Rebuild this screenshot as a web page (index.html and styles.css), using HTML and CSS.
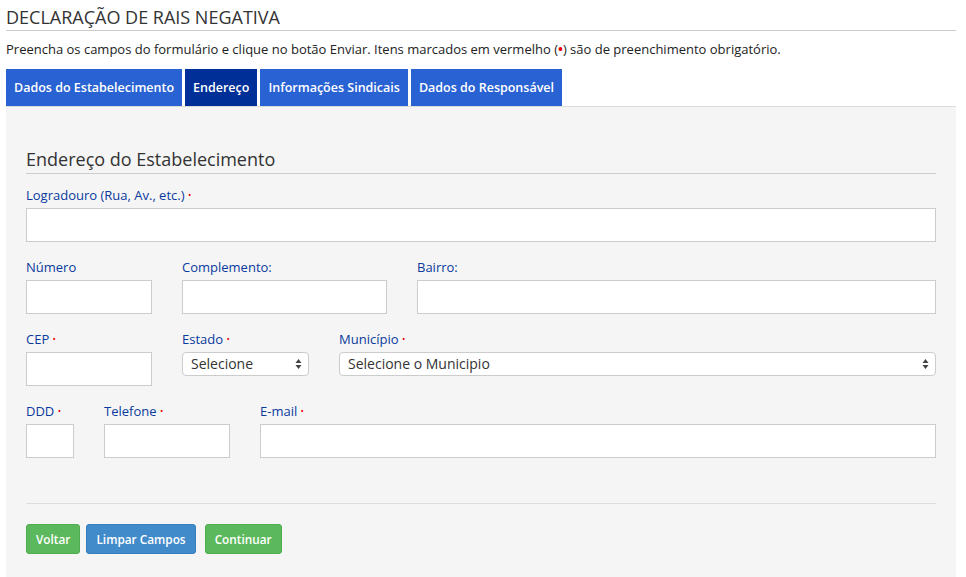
FILE: index.html
```html
<!DOCTYPE html>
<html lang="pt-BR">
<head>
<meta charset="utf-8">
<title>Declaração de RAIS Negativa</title>
<link rel="stylesheet" href="styles.css">
</head>
<body>
<div class="page">
  <h1 class="title">DECLARAÇÃO DE RAIS NEGATIVA</h1>
  <p class="intro">Preencha os campos do formulário e clique no botão Enviar. Itens marcados em vermelho (<span class="req-dot">•</span>) são de preenchimento obrigatório.</p>
  <nav class="tabs">
    <a class="tab">Dados do Estabelecimento</a>
    <a class="tab active">Endereço</a>
    <a class="tab">Informações Sindicais</a>
    <a class="tab">Dados do Responsável</a>
  </nav>
  <div class="panel">
    <h2 class="section-title">Endereço do Estabelecimento</h2>
    <div class="row">
      <div class="field grow">
        <label>Logradouro (Rua, Av., etc.) <span class="req">•</span></label>
        <input type="text" class="input">
      </div>
    </div>
    <div class="row">
      <div class="field w126">
        <label>Número</label>
        <input type="text" class="input">
      </div>
      <div class="field w205">
        <label>Complemento:</label>
        <input type="text" class="input">
      </div>
      <div class="field grow">
        <label>Bairro:</label>
        <input type="text" class="input">
      </div>
    </div>
    <div class="row">
      <div class="field w126">
        <label>CEP <span class="req">•</span></label>
        <input type="text" class="input">
      </div>
      <div class="field w127">
        <label>Estado <span class="req">•</span></label>
        <div class="select-wrap">
          <select class="select"><option>Selecione</option></select>
          <svg class="arrows" width="7" height="12" viewBox="0 0 7 12"><path d="M3.5 1 L6.5 5 H0.5 Z M3.5 11 L6.5 7 H0.5 Z" fill="#444"/></svg>
        </div>
      </div>
      <div class="field grow">
        <label>Município <span class="req">•</span></label>
        <div class="select-wrap">
          <select class="select"><option>Selecione o Municipio</option></select>
          <svg class="arrows" width="7" height="12" viewBox="0 0 7 12"><path d="M3.5 1 L6.5 5 H0.5 Z M3.5 11 L6.5 7 H0.5 Z" fill="#444"/></svg>
        </div>
      </div>
    </div>
    <div class="row">
      <div class="field w48">
        <label>DDD <span class="req">•</span></label>
        <input type="text" class="input">
      </div>
      <div class="field w126">
        <label>Telefone <span class="req">•</span></label>
        <input type="text" class="input">
      </div>
      <div class="field grow">
        <label>E-mail <span class="req">•</span></label>
        <input type="text" class="input">
      </div>
    </div>
    <div class="actions">
      <button class="btn btn-green">Voltar</button>
      <button class="btn btn-blue">Limpar Campos</button>
      <button class="btn btn-green btn-last">Continuar</button>
    </div>
  </div>
</div>
</body>
</html>
```
FILE: styles.css
```css
* { box-sizing: border-box; }
body {
  margin: 0;
  font-family: "Open Sans", "Liberation Sans", sans-serif;
  color: #333;
  background: #fff;
}
.page {
  width: 950px;
  margin-left: 6px;
}
.title {
  margin: 0;
  padding-top: 5px;
  font-size: 18px;
  font-weight: 400;
  line-height: 24px;
  color: #333;
  border-bottom: 1px solid #ccc;
  padding-bottom: 1px;
}
.intro {
  margin: 9px 0 0 0;
  font-size: 13px;
  line-height: 18px;
  color: #222;
}
.req-dot { color: #e00; font-weight: 700; }
.req { color: #e00; font-size: 9px; vertical-align: 2px; }
.tabs {
  display: flex;
  gap: 3px;
  margin-top: 11px;
}
.tab {
  display: block;
  height: 37px;
  line-height: 37px;
  padding: 0 8px;
  background: #2962d3;
  color: #fff;
  font-size: 12.5px;
  font-weight: 600;
  text-decoration: none;
}
.tab.active { background: #002f98; }
.panel {
  background: #f5f5f5;
  border-top: 1px solid #dcdcdc;
  padding: 41px 20px 30px 20px;
  height: 472px;
}
.section-title {
  margin: 0;
  font-size: 18px;
  font-weight: 400;
  line-height: 22px;
  padding-bottom: 3px;
  color: #333;
  border-bottom: 1px solid #ccc;
  margin-bottom: 12px;
}
.row {
  display: flex;
  gap: 30px;
  margin-bottom: 16px;
}
.field { display: flex; flex-direction: column; }
.field label {
  font-size: 13px;
  line-height: 18px;
  color: #0a3a9e;
  margin-bottom: 4px;
}
.grow { flex: 1; }
.w126 { width: 126px; }
.w127 { width: 127px; }
.w205 { width: 205px; }
.w48 { width: 48px; }
.input {
  height: 34px;
  border: 1px solid #ccc;
  background: #fff;
  border-radius: 0;
  font-family: inherit;
  font-size: 14px;
  padding: 0 8px;
}
.select-wrap { position: relative; }
.select {
  width: 100%;
  height: 24px;
  appearance: none;
  -webkit-appearance: none;
  border: 1px solid #ccc;
  border-radius: 4px;
  background: #fff;
  font-family: inherit;
  font-size: 14px;
  color: #333;
  padding: 0 8px;
  line-height: 22px;
}
.arrows {
  position: absolute;
  right: 7px;
  top: 6px;
}
.actions {
  border-top: 1px solid #ddd;
  margin-top: 45px;
  padding-top: 20px;
  display: flex;
  gap: 6px;
}
.btn {
  height: 30px;
  padding: 0 9px;
  border-radius: 3px;
  color: #fff;
  font-family: inherit;
  font-size: 11.8px;
  font-weight: 600;
  cursor: pointer;
}
.btn-green { background: #5cb85c; border: 1px solid #4cae4c; }
.btn-blue { background: #428bca; border: 1px solid #357ebd; }
.btn-last { margin-left: 3px; }
```
